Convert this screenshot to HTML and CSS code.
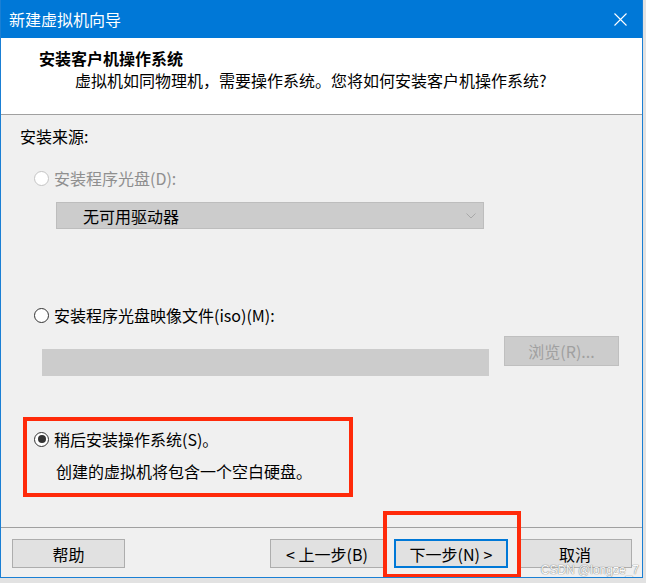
FILE: index.html
```html
<!DOCTYPE html>
<html lang="zh-CN">
<head>
    <meta charset="UTF-8">
    <title>新建虚拟机向导</title>
    <link rel="stylesheet" href="styles.css">
</head>
<body>
    <div class="window">
        <div class="titlebar">
            <span class="title-text">新建虚拟机向导</span>
            <svg class="close-icon" width="13" height="13" viewBox="0 0 13 13">
                <path d="M0.5 0.5 L12.5 12.5 M12.5 0.5 L0.5 12.5" stroke="#fff" stroke-width="1.1" fill="none"/>
            </svg>
        </div>

        <div class="header">
            <div class="header-title">安装客户机操作系统</div>
            <div class="header-sub">虚拟机如同物理机，需要操作系统。您将如何安装客户机操作系统?</div>
        </div>

        <div class="content">
            <div class="source-label">安装来源:</div>

            <div class="radio-row disabled row-disc">
                <span class="radio"></span>
                <span>安装程序光盘(D):</span>
            </div>
            <div class="select-box">
                <span>无可用驱动器</span>
                <svg class="chevron" width="10" height="6" viewBox="0 0 10 6">
                    <path d="M0.5 0.5 L5 5 L9.5 0.5" stroke="#a8a8a8" stroke-width="1" fill="none"/>
                </svg>
            </div>

            <div class="radio-row row-iso">
                <span class="radio"></span>
                <span>安装程序光盘映像文件(iso)(M):</span>
            </div>
            <div class="iso-row">
                <div class="iso-input"></div>
                <div class="browse-btn">浏览(R)...</div>
            </div>

            <div class="radio-row row-later">
                <span class="radio checked"></span>
                <span>稍后安装操作系统(S)。</span>
            </div>
            <div class="later-desc">创建的虚拟机将包含一个空白硬盘。</div>
        </div>

        <div class="footer">
            <button class="btn">帮助</button>
            <div class="spacer"></div>
            <button class="btn">&lt; 上一步(B)</button>
            <button class="btn primary">下一步(N) &gt;</button>
            <button class="btn">取消</button>
        </div>

        <!-- annotation frames drawn over the dialog -->
        <div class="mark mark-later"></div>
        <div class="mark mark-next"></div>
        <div class="watermark">CSDN @longze_7</div>
    </div>
</body>
</html>
```

FILE: styles.css
```css
body {
    margin: 0;
    background-color: #e2e2e2;
    font-family: "Noto Sans CJK SC", "Microsoft YaHei", sans-serif;
    font-size: 16px;
    color: #000;
}
.window {
    position: relative;
    width: 641px;
    height: 577px;
    border: 1px solid #1a7fd4;
    border-top: none;
    background-color: #f0f0f0;
    display: flex;
    flex-direction: column;
    overflow: hidden;
}
.titlebar {
    height: 38px;
    background-color: #0078d7;
    display: flex;
    align-items: center;
    padding: 0 16px 0 9px;
    margin: 0 -1px;
    flex-shrink: 0;
}
.title-text {
    color: #fff;
    font-size: 16px;
    line-height: 20px;
}
.close-icon { margin-left: auto; }

.header {
    background-color: #fff;
    border-bottom: 1px solid #a0a0a0;
    padding: 9px 0 0 38px;
    box-sizing: border-box;
    height: 77px;
    flex-shrink: 0;
}
.header-title {
    font-weight: bold;
    font-size: 16px;
    line-height: 22px;
}
.header-sub {
    margin-top: 1px;
    padding-left: 36px;
    line-height: 20px;
}

.content {
    flex: 1;
    padding: 11px 0 0 19px;
}
.source-label { line-height: 20px; }

.radio-row {
    display: flex;
    align-items: center;
    gap: 5px;
    height: 20px;
    line-height: 20px;
    padding-left: 14px;
}
.radio {
    width: 13px;
    height: 13px;
    border: 1px solid #333;
    border-radius: 50%;
    background-color: #fff;
    display: flex;
    align-items: center;
    justify-content: center;
    flex-shrink: 0;
}
.radio.checked::after {
    content: "";
    width: 8px;
    height: 8px;
    border-radius: 50%;
    background-color: #333;
}
.disabled { color: #8f8f8f; }
.disabled .radio { border-color: #c4c4c4; }

.row-disc { margin-top: 22px; }
.select-box {
    margin: 14px 0 0 36px;
    width: 400px;
    height: 25px;
    background-color: #cccccc;
    border: 1px solid #bdbdbd;
    display: flex;
    align-items: center;
    padding: 0 0 0 26px;
}
.select-box span { line-height: 20px; }
.chevron { margin-left: auto; margin-right: 7px; }

.row-iso { margin-top: 76px; }
.iso-row {
    display: flex;
    align-items: flex-start;
    margin-top: 11px;
    padding-left: 22px;
}
.iso-input {
    width: 447px;
    height: 27px;
    margin-top: 13px;
    background-color: #cccccc;
}
.browse-btn {
    margin-left: 15px;
    width: 113px;
    height: 28px;
    border: 1px solid #bfbfbf;
    background-color: #cccccc;
    color: #a0a0a0;
    display: flex;
    align-items: center;
    justify-content: center;
    line-height: 20px;
}

.row-later { margin-top: 53px; }
.later-desc {
    margin: 12px 0 0 36px;
    line-height: 20px;
}

.footer {
    border-top: 1px solid #a0a0a0;
    display: flex;
    align-items: flex-start;
    gap: 10px;
    padding: 11px 10px 0 11px;
    box-sizing: border-box;
    height: 50px;
    flex-shrink: 0;
}
.spacer { flex: 1; }
.btn {
    width: 114px;
    height: 29px;
    border: 1px solid #adadad;
    background-color: #e1e1e1;
    font-family: inherit;
    font-size: 16px;
    color: #000;
    padding: 0;
    line-height: 20px;
}
.btn:first-child { width: 113px; }
.btn.primary { border: 2px solid #0078d7; }

.mark {
    position: absolute;
    border: 4px solid #ff2a0a;
    box-sizing: border-box;
}
.mark-later {
    left: 22px;
    top: 417px;
    width: 330px;
    height: 80px;
}
.mark-next {
    left: 382px;
    top: 511px;
    width: 138px;
    height: 67px;
}
.watermark {
    position: absolute;
    right: 3px;
    bottom: 0;
    font-family: "Liberation Sans", sans-serif;
    font-size: 12px;
    line-height: 14px;
    color: #fafafa;
    text-shadow: 0 0 1px #707070, 0 0 1px #909090;
}
```
